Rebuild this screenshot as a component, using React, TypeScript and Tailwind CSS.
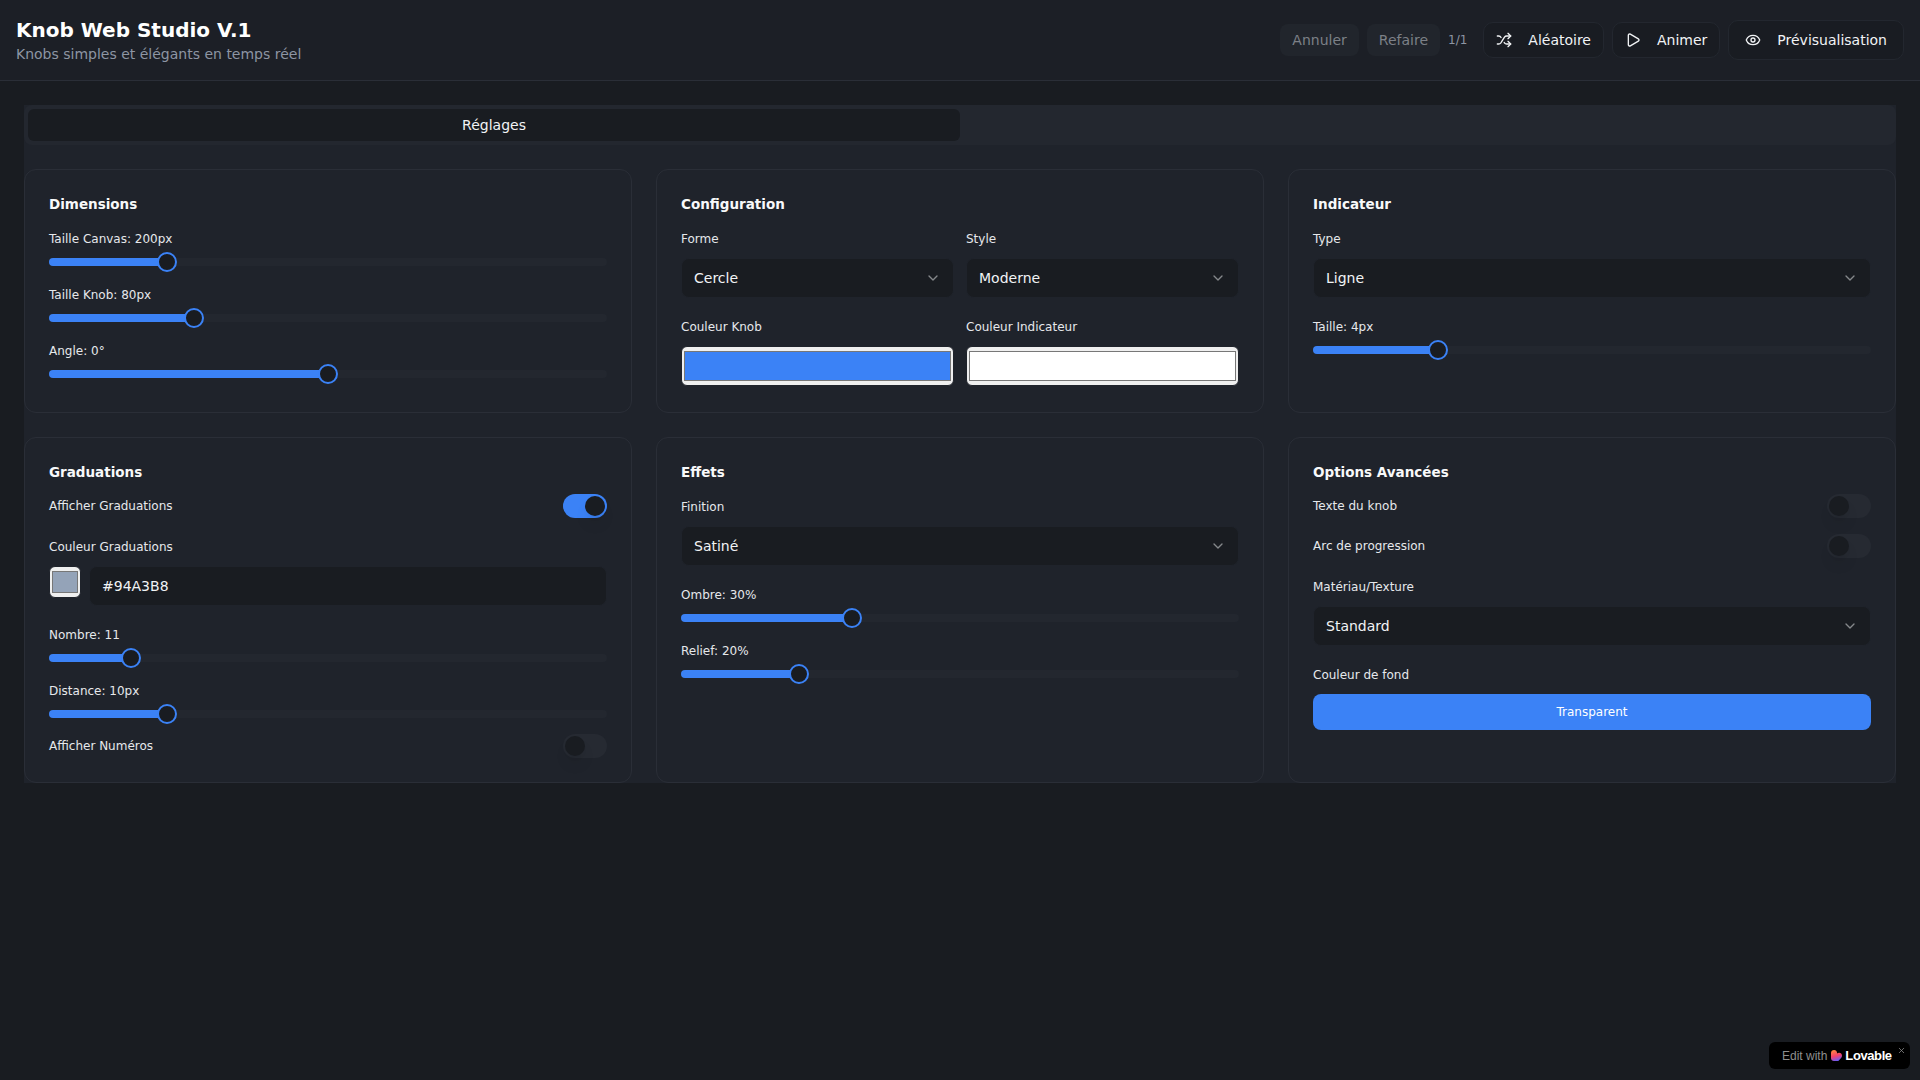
import { ChevronDown, Eye, Play, Shuffle, X } from 'lucide-react';
import type { ReactNode } from 'react';

function Card({ title, children }: { title: string; children: ReactNode }) {
    return (
        <div className="rounded-xl border border-[#2a2e37] bg-[#1f232b] p-6">
            <h3 className="h-5 text-[13.5px] leading-5 font-bold text-[#f8f9fa]">{title}</h3>
            {children}
        </div>
    );
}

function FieldLabel({ children }: { children: ReactNode }) {
    return <label className="block h-4 text-xs leading-4 text-[#e6e8eb]">{children}</label>;
}

function Slider({ label, value }: { label: string; value: number }) {
    // same thumb offset as radix: the thumb stays inside the track at both ends
    const center = `calc(${value * 100}% + ${10 - 20 * value}px)`;
    return (
        <div>
            <FieldLabel>{label}</FieldLabel>
            <div className="relative mt-[5px] flex h-5 items-center">
                <div className="h-2 w-full overflow-hidden rounded-full bg-[#23272f]">
                    <div className="h-full bg-[#3b82f6]" style={{ width: center }} />
                </div>
                <div
                    className="absolute h-5 w-5 -translate-x-1/2 rounded-full border-2 border-[#3b82f6] bg-[#191c21]"
                    style={{ left: center }}
                />
            </div>
        </div>
    );
}

function Select({ value }: { value: string }) {
    return (
        <div className="mt-[11px] flex h-10 items-center justify-between rounded-lg border border-[#1f232b] bg-[#191c21] px-3 text-sm text-[#f1f3f5]">
            <span>{value}</span>
            <ChevronDown className="h-4 w-4 opacity-50" />
        </div>
    );
}

function Toggle({ label, on }: { label: string; on?: boolean }) {
    return (
        <div className="flex h-6 items-center justify-between">
            <span className="text-xs text-[#e6e8eb]">{label}</span>
            <div className={on ? 'flex h-6 w-11 items-center justify-end rounded-full bg-[#3b82f6] px-0.5' : 'flex h-6 w-11 items-center rounded-full bg-[#262a32] px-0.5'}>
                <div className="h-5 w-5 rounded-full bg-[#191c21] shadow-lg" />
            </div>
        </div>
    );
}

function ColorInput({ value, className }: { value: string; className: string }) {
    return <input type="color" defaultValue={value} className={className} />;
}

function GhostButton({ children, disabled }: { children: ReactNode; disabled?: boolean }) {
    return (
        <button className={disabled ? 'flex h-[32px] items-center rounded-lg bg-[#21252c] px-3 text-sm text-[#7c8087]' : 'flex h-9 items-center gap-4 rounded-[10px] border border-[#23272f] bg-[#191c22] px-3 text-sm text-[#f1f3f5]'}>
            {children}
        </button>
    );
}

export default function App() {
    return (
        <div className="min-h-screen bg-[#191c21] font-['DejaVu_Sans',sans-serif] text-[#f1f3f5]">
            <header className="flex h-[81px] items-center justify-between border-b border-[#2a2e37] bg-[#1c1f26] px-4">
                <div>
                    <h1 className="text-xl leading-7 font-bold text-white">Knob Web Studio V.1</h1>
                    <p className="text-sm leading-5 text-[#8d95a3]">Knobs simples et élégants en temps réel</p>
                </div>
                <div className="flex items-center gap-2">
                    <GhostButton disabled>Annuler</GhostButton>
                    <GhostButton disabled>Refaire</GhostButton>
                    <span className="mr-2 text-xs text-[#8d95a3]">1/1</span>
                    <GhostButton>
                        <Shuffle className="h-4 w-4" />
                        Aléatoire
                    </GhostButton>
                    <GhostButton>
                        <Play className="h-4 w-4" />
                        Animer
                    </GhostButton>
                    <button className="flex h-10 items-center gap-4 rounded-[10px] border border-[#23272f] bg-[#191c22] px-4 text-sm text-[#f1f3f5]">
                        <Eye className="h-4 w-4" />
                        Prévisualisation
                    </button>
                </div>
            </header>

            <main className="px-6 pt-6">
                <div className="bg-[#1f232b]">
                    <div className="grid h-10 grid-cols-2 rounded-lg bg-[#23272f] p-1">
                        <div className="flex items-center justify-center rounded-md bg-[#191c21] text-sm">Réglages</div>
                    </div>

                    <div className="mt-6 grid grid-cols-3 gap-6">
                        <Card title="Dimensions">
                            <div className="mt-[17px] flex flex-col gap-[15px]">
                                <Slider label="Taille Canvas: 200px" value={0.2} />
                                <Slider label="Taille Knob: 80px" value={0.25} />
                                <Slider label="Angle: 0°" value={0.5} />
                            </div>
                        </Card>

                        <Card title="Configuration">
                            <div className="mt-[17px] grid grid-cols-2 gap-x-3 gap-y-[21px] pb-0.5">
                                <div>
                                    <FieldLabel>Forme</FieldLabel>
                                    <Select value="Cercle" />
                                </div>
                                <div>
                                    <FieldLabel>Style</FieldLabel>
                                    <Select value="Moderne" />
                                </div>
                                <div>
                                    <FieldLabel>Couleur Knob</FieldLabel>
                                    <ColorInput value="#3b82f6" className="mt-[11px] block h-10 w-full rounded-md border border-[#1f232b] bg-[#efefef]" />
                                </div>
                                <div>
                                    <FieldLabel>Couleur Indicateur</FieldLabel>
                                    <ColorInput value="#ffffff" className="mt-[11px] block h-10 w-full rounded-md border border-[#1f232b] bg-[#efefef]" />
                                </div>
                            </div>
                        </Card>

                        <Card title="Indicateur">
                            <div className="mt-[17px]">
                                <FieldLabel>Type</FieldLabel>
                                <Select value="Ligne" />
                            </div>
                            <div className="mt-[21px]">
                                <Slider label="Taille: 4px" value={0.214} />
                            </div>
                        </Card>

                        <Card title="Graduations">
                            <div className="mt-3">
                                <Toggle label="Afficher Graduations" on />
                            </div>
                            <div className="mt-[21px]">
                                <FieldLabel>Couleur Graduations</FieldLabel>
                                <div className="mt-[11px] flex items-start gap-2">
                                    <ColorInput value="#94a3b8" className="block h-8 w-8 rounded-md border border-[#1f232b] bg-[#efefef]" />
                                    <div className="flex h-10 flex-1 items-center rounded-lg border border-[#1f232b] bg-[#191c21] px-3 text-sm">#94A3B8</div>
                                </div>
                            </div>
                            <div className="mt-[21px] flex flex-col gap-[15px]">
                                <Slider label="Nombre: 11" value={0.134} />
                                <Slider label="Distance: 10px" value={0.2} />
                            </div>
                            <div className="mt-2.5">
                                <Toggle label="Afficher Numéros" />
                            </div>
                        </Card>

                        <Card title="Effets">
                            <div className="mt-[17px]">
                                <FieldLabel>Finition</FieldLabel>
                                <Select value="Satiné" />
                            </div>
                            <div className="mt-[21px] flex flex-col gap-[15px]">
                                <Slider label="Ombre: 30%" value={0.3} />
                                <Slider label="Relief: 20%" value={0.2} />
                            </div>
                        </Card>

                        <Card title="Options Avancées">
                            <div className="mt-3 flex flex-col gap-4">
                                <Toggle label="Texte du knob" />
                                <Toggle label="Arc de progression" />
                            </div>
                            <div className="mt-[21px]">
                                <FieldLabel>Matériau/Texture</FieldLabel>
                                <Select value="Standard" />
                            </div>
                            <div className="mt-[21px]">
                                <FieldLabel>Couleur de fond</FieldLabel>
                                <button className="mt-[11px] h-9 w-full rounded-lg bg-[#3b82f6] text-xs text-white">Transparent</button>
                            </div>
                        </Card>
                    </div>
                </div>
            </main>

            <div className="fixed right-[10px] bottom-[11px] flex h-[27px] w-[141px] items-center rounded-md bg-black pl-[13px] font-['Liberation_Sans',sans-serif] text-xs text-[#8f8f8f]">
                <span>Edit with</span>
                <svg viewBox="0 0 12 12" className="mr-[3px] ml-1 h-[11px] w-[11px]">
                    <defs>
                        <linearGradient id="lovable" x1="0.2" y1="0" x2="0.5" y2="1">
                            <stop offset="0" stopColor="#ff8a3d" />
                            <stop offset="0.55" stopColor="#f5416c" />
                            <stop offset="1" stopColor="#6a5cf6" />
                        </linearGradient>
                    </defs>
                    <path d="M3.4 0C5.2 0 6.6 1.3 6.6 3.1L6.6 3.8C7.2 3.2 7.9 2.9 8.8 2.9 10.6 2.9 12 4.3 12 6.2 12 7.2 11.6 8 11 8.6L8 12H3.2C1.3 12 0 10.7 0 9V3.4C0 1.4 1.4 0 3.4 0Z" fill="url(#lovable)" />
                </svg>
                <span className="text-[13px] font-bold tracking-[-0.4px] text-white">Lovable</span>
                <X className="absolute top-[4px] right-[4px] h-[9px] w-[9px]" />
            </div>
        </div>
    );
}
